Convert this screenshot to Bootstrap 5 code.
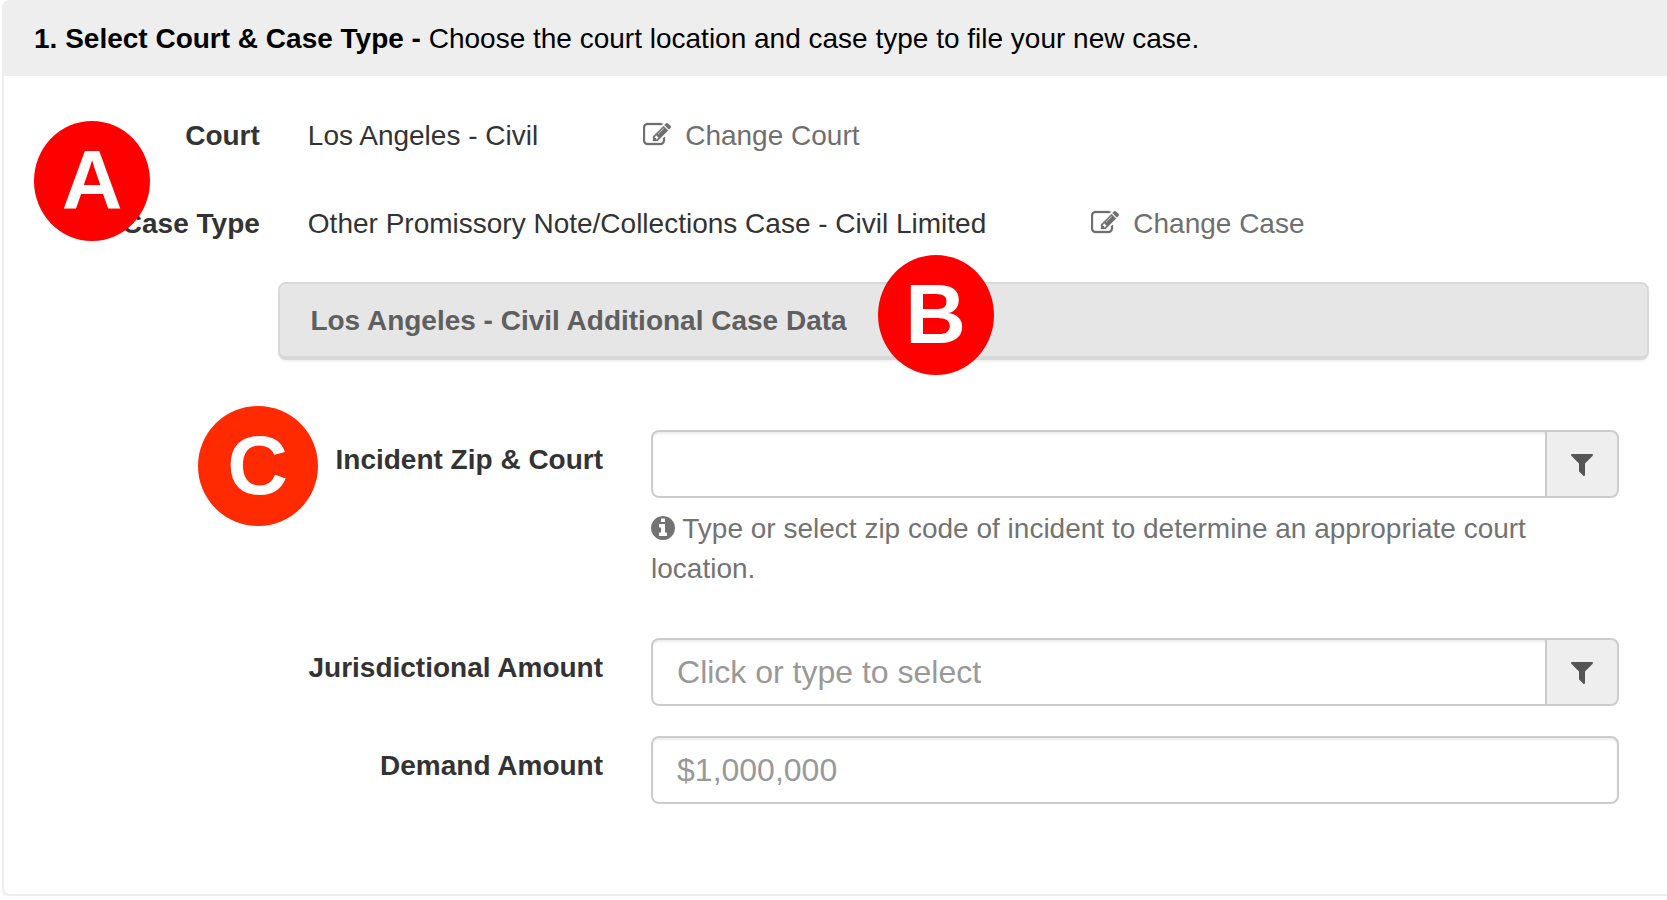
<!DOCTYPE html>
<html lang="en">
<head>
<meta charset="utf-8">
<meta name="viewport" content="width=device-width, initial-scale=1">
<title>Select Court &amp; Case Type</title>
<link href="https://cdn.jsdelivr.net/npm/bootstrap@5.3.0/dist/css/bootstrap.min.css" rel="stylesheet">
<style>
  body { font-family: "Liberation Sans", Arial, sans-serif; font-size: 28px; line-height: 40px; color: #333; background: #fff; overflow-x: hidden; }
  .row { --bs-gutter-x: 48px; }
  .filing-panel { margin-left: 2px; border: 2px solid #eee; border-right: 0; border-radius: 8px 0 0 8px; box-shadow: 0 2px 2px rgba(0, 0, 0, .05); }
  .filing-head { background: #eee; color: #000; padding: 17px 30px; font-size: 28px; line-height: 40px; }
  .filing-body { padding: 40px 28px 0; }
  .summary-row { margin-bottom: 48px; }
  .summary-row + .summary-row { margin-bottom: 38px; }
  .summary-value { gap: 105px; }
  .change-link { color: #6f6f6f; text-decoration: none; gap: 14px; }
  .glyph { width: 28px; height: 28px; fill: currentColor; flex: none; }
  .glyph-edit { margin-top: 5px; stroke: currentColor; stroke-width: 20px; }
  .glyph-info { width: 24px; height: 24px; fill: currentColor; vertical-align: -2px; }

  .case-data { margin: 0 18px 0 276px; padding-bottom: 90px; }
  @media (min-width: 1200px) { .case-data { margin-left: 16.5%; } }
  .case-data-head { padding: 17px 30px 15px; font-size: 28px; line-height: 40px; color: #5f5f5f; background: #e6e6e6; border: 2px solid #d8d8d8; border-bottom-width: 4px; border-radius: 8px; box-shadow: 0 2px 2px rgba(0, 0, 0, .05); }
  .case-fields { padding: 70px 30px 0 34px; }
  .field-label { padding: 10px 0 0; white-space: nowrap; display: inline-block; }
  .field-row { margin-bottom: 30px; }
  .field-row.has-help { margin-bottom: 49px; }
  .field-row:last-child { margin-bottom: 0; }
  .field-input { height: 68px; padding: 0 24px; font-size: 32px; color: #333; border: 2px solid #ccc; border-radius: 8px; box-shadow: inset 0 2px 2px rgba(0, 0, 0, .075); }
  .field-input::placeholder { color: #999; }
  .input-group > .field-input { border-right-width: 0; }
  .filter-btn { width: 74px; padding: 0; color: #555; background: #eee; border: 2px solid #ccc; border-radius: 8px; }
  .field-help { margin-top: 11px; color: #737373; }

  .callout-mark { position: absolute; width: 116px; height: 120px; border-radius: 50%; background: #f00; color: #fff; font-size: 84px; line-height: 118px; font-weight: 700; text-align: center; z-index: 10; }
  .mark-a { left: 30px; top: 45px; }
  .mark-b { left: 100%; top: -46px; margin-left: 31px; }
  .mark-c { right: 100%; top: -24px; width: 120px; margin-right: 18px; background: #ff2a00; }
</style>
</head>
<body>
<svg class="d-none" aria-hidden="true">
  <symbol id="icon-edit" viewBox="0 0 1792 1792"><path d="M888 1184l116-116-152-152-116 116v56h96v96h56zm440-720q-16-16-33 1l-350 350q-17 17-1 33t33-1l350-350q17-17 1-33zm80 594v190q0 119-84.500 203.500t-203.500 84.500h-832q-119 0-203.500-84.500t-84.500-203.500v-832q0-119 84.500-203.500t203.500-84.500h832q63 0 117 25 15 7 18 23 3 17-9 29l-49 49q-14 14-32 8-23-6-45-6h-832q-66 0-113 47t-47 113v832q0 66 47 113t113 47h832q66 0 113-47t47-113v-126q0-13 9-22l64-64q15-15 35-7t20 29zm-96-738l288 288-672 672h-288v-288zm444 132l-92 92-288-288 92-92q28-28 68-28t68 28l152 152q28 28 28 68t-28 68z"/></symbol>
  <symbol id="icon-filter" viewBox="0 0 1792 1792"><path d="M1595 295q17 41-14 70l-493 493v742q0 42-39 59-13 5-25 5-27 0-45-19l-256-256q-19-19-19-45v-486l-493-493q-31-29-14-70 17-39 59-39h1280q42 0 59 39z"/></symbol>
  <symbol id="icon-info" viewBox="128 128 1536 1536"><path d="M1152 1376v-160q0-14-9-23t-23-9h-96v-512q0-14-9-23t-23-9h-320q-14 0-23 9t-9 23v160q0 14 9 23t23 9h96v320h-96q-14 0-23 9t-9 23v160q0 14 9 23t23 9h448q14 0 23-9t9-23zm-128-896v-160q0-14-9-23t-23-9h-192q-14 0-23 9t-9 23v160q0 14 9 23t23 9h192q14 0 23-9t9-23zm640 416q0 209-103 385.500t-279.500 279.500-385.500 103-385.500-103-279.500-279.500-103-385.500 103-385.500 279.500-279.500 385.500-103 385.500 103 279.500 279.500 103 385.500z"/></symbol>
</svg>

<main class="filing-panel">
  <h1 class="filing-head fw-normal mb-0"><strong>1. Select Court &amp; Case Type -</strong> Choose the court location and case type to file your new case.</h1>

  <div class="position-relative">
    <span class="callout-mark mark-a">A</span>

    <div class="filing-body">
      <div class="row summary-row">
        <div class="col-2 text-end fw-bold">Court</div>
        <div class="col-10 d-flex summary-value">
          <span>Los Angeles - Civil</span>
          <a href="#" class="change-link d-flex"><svg class="glyph glyph-edit" aria-hidden="true"><use href="#icon-edit"/></svg>Change Court</a>
        </div>
      </div>
      <div class="row summary-row">
        <div class="col-2 text-end fw-bold text-nowrap">Case Type</div>
        <div class="col-10 d-flex summary-value">
          <span>Other Promissory Note/Collections Case - Civil Limited</span>
          <a href="#" class="change-link d-flex"><svg class="glyph glyph-edit" aria-hidden="true"><use href="#icon-edit"/></svg>Change Case</a>
        </div>
      </div>
    </div>

    <section class="case-data">
      <h2 class="case-data-head fw-bold mb-0"><span class="position-relative d-inline-block">Los Angeles - Civil Additional Case Data<span class="callout-mark mark-b">B</span></span></h2>

      <form class="case-fields">
        <div class="row field-row has-help">
          <div class="col-3 ps-0 d-flex justify-content-end">
            <label for="zip" class="field-label fw-bold position-relative">Incident Zip &amp; Court<span class="callout-mark mark-c">C</span></label>
          </div>
          <div class="col-9">
            <div class="input-group">
              <input type="text" id="zip" class="form-control field-input" aria-describedby="zip-help">
              <button type="button" class="btn filter-btn d-flex align-items-center justify-content-center" aria-label="Show zip codes"><svg class="glyph" aria-hidden="true"><use href="#icon-filter"/></svg></button>
            </div>
            <div id="zip-help" class="field-help"><svg class="glyph-info" aria-hidden="true"><use href="#icon-info"/></svg> Type or select zip code of incident to determine an appropriate court location.</div>
          </div>
        </div>

        <div class="row field-row">
          <div class="col-3 ps-0 d-flex justify-content-end">
            <label for="jurisdiction" class="field-label fw-bold">Jurisdictional Amount</label>
          </div>
          <div class="col-9">
            <div class="input-group">
              <input type="text" id="jurisdiction" class="form-control field-input" placeholder="Click or type to select">
              <button type="button" class="btn filter-btn d-flex align-items-center justify-content-center" aria-label="Show amounts"><svg class="glyph" aria-hidden="true"><use href="#icon-filter"/></svg></button>
            </div>
          </div>
        </div>

        <div class="row field-row">
          <div class="col-3 ps-0 d-flex justify-content-end">
            <label for="demand" class="field-label fw-bold">Demand Amount</label>
          </div>
          <div class="col-9">
            <input type="text" id="demand" class="form-control field-input" placeholder="$1,000,000">
          </div>
        </div>
      </form>
    </section>
  </div>
</main>
<script src="https://cdn.jsdelivr.net/npm/bootstrap@5.3.0/dist/js/bootstrap.bundle.min.js"></script>
</body>
</html>
